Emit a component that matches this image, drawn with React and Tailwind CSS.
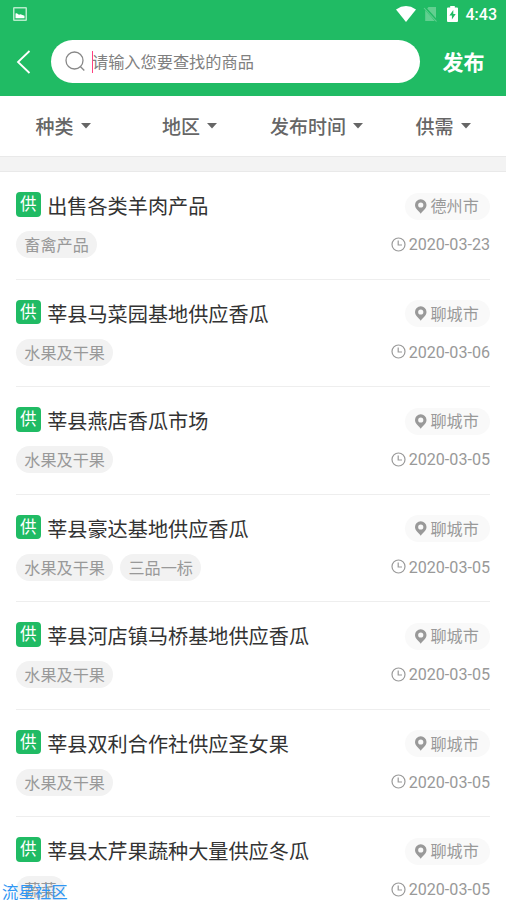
const items = [
  { title: '出售各类羊肉产品', city: '德州市', tags: ['畜禽产品'], date: '2020-03-23' },
  { title: '莘县马菜园基地供应香瓜', city: '聊城市', tags: ['水果及干果'], date: '2020-03-06' },
  { title: '莘县燕店香瓜市场', city: '聊城市', tags: ['水果及干果'], date: '2020-03-05' },
  { title: '莘县豪达基地供应香瓜', city: '聊城市', tags: ['水果及干果', '三品一标'], date: '2020-03-05' },
  { title: '莘县河店镇马桥基地供应香瓜', city: '聊城市', tags: ['水果及干果'], date: '2020-03-05' },
  { title: '莘县双利合作社供应圣女果', city: '聊城市', tags: ['水果及干果'], date: '2020-03-05' },
  { title: '莘县太芹果蔬种大量供应冬瓜', city: '聊城市', tags: ['蔬菜'], date: '2020-03-05' },
];

function StatusBar() {
  return (
    <div className="flex h-[28px] items-center pl-[13px] pr-[9px]">
      <svg className="h-[14px] w-[14px]" viewBox="0 0 14 14">
        <rect x="0.75" y="0.75" width="12.5" height="12.5" rx="0.5" fill="none" stroke="#b5ecca" strokeWidth="1.5" />
        <path d="M2.500 11.300V6.600l1.300-.4 2.200 1.600 1.500-.6 4 1.600v2.500z" fill="#fff" />
      </svg>
      <svg className="ml-auto h-4 w-5" viewBox="0 0 20 16">
        <path d="M0 3.4Q10-3.4 20 3.4L10 16z" fill="#fff" />
      </svg>
      <svg className="ml-[7px] h-4 w-[15px]" viewBox="0 0 15 16">
        <path d="M5.500 1H13v11.200L4.200 2.500zM2.200 4.300L11.800 15H2.200z" fill="#62cf90" />
        <path d="M1 2l12.500 13.500" stroke="#62cf90" strokeWidth="1.100" />
      </svg>
      <svg className="ml-[9px] h-4 w-[11px]" viewBox="0 0 11 16">
        <path d="M3.2 0h4.6v1.6H10a1 1 0 0 1 1 1V15a1 1 0 0 1-1 1H1a1 1 0 0 1-1-1V2.600a1 1 0 0 1 1-1h2.200z" fill="#fff" />
        <path d="M6.300 4L2.400 9.500h2.500V13.500L8.700 8H6.300z" fill="#20bb64" />
      </svg>
      <span className="ml-[8px] mt-[2px] font-['Roboto'] text-[16px] font-medium leading-none">4:43</span>
    </div>
  );
}

function Filter({ label, className }) {
  return (
    <div className={'flex items-center gap-[7px] ' + className}>
      <span className="text-[19px] font-medium leading-none">{label}</span>
      <svg className="h-[6px] w-[10px]" viewBox="0 0 10 6">
        <path d="M0 0h10L5 5.500z" fill="#666" />
      </svg>
    </div>
  );
}

function Row({ item }) {
  return (
    <li className="h-[107.5px] shrink-0 border-b border-[#eee] pt-[20px]">
      <div className="flex h-[28px] items-start">
        <span className="flex h-[24.500px] w-[24.500px] items-center justify-center rounded-[4px] bg-[#20bb64] pb-[2px] text-[16.500px] leading-none text-white">供</span>
        <span className="ml-[6.700px] text-[20.150px] leading-[28px] text-[#333]">{item.title}</span>
        <span className="ml-auto mt-[0.500px] flex h-[27px] w-[85px] items-center rounded-full bg-[#f9f9f9] pl-[10px] text-[16.130px] text-[#999]">
          <svg className="mr-[4px] h-[15px] w-[11.500px]" viewBox="0 0 12 15">
            <path fillRule="evenodd" d="M6 0a6 6 0 0 1 6 6c0 3.500-3.600 6.200-6 9C3.600 12.200 0 9.500 0 6a6 6 0 0 1 6-6zm0 3.200a2.700 2.700 0 1 0 0 5.400 2.700 2.700 0 0 0 0-5.400z" fill="#999" />
          </svg>
          <span className="pb-px leading-none">{item.city}</span>
        </span>
      </div>
      <div className="mt-[11px] flex h-[27px] items-center">
        <div className="flex gap-[7px]">
          {item.tags.map((tag) => (
            <span key={tag} className="flex h-[27px] items-center rounded-full bg-[#f2f2f2] px-[8.300px] text-[16.130px] leading-none text-[#999]">{tag}</span>
          ))}
        </div>
        <svg className="mb-px ml-auto h-[15px] w-[15px]" viewBox="0 0 15 15" fill="none" stroke="#999" strokeWidth="1.200">
          <circle cx="7.500" cy="7.500" r="6.500" />
          <path d="M7.200 3.500V8h3.800" />
        </svg>
        <span className="ml-[3px] mt-[2px] font-['Roboto'] text-[16.130px] leading-none text-[#999]">{item.date}</span>
      </div>
    </li>
  );
}

export default function App() {
  return (
    <div className="relative flex h-[900px] w-[506px] flex-col overflow-hidden bg-white font-['Noto_Sans_CJK_SC',sans-serif]">
      <header className="h-[96px] shrink-0 bg-[#20bb64] text-white">
        <StatusBar />
        <div className="mt-[12px] flex h-[43px] items-center">
          <svg className="ml-[16px] h-[24px] w-[15px]" viewBox="0 0 15 24" fill="none" stroke="#fff" strokeWidth="1.800">
            <path d="M13.500 1L2 12l11.500 11" />
          </svg>
          <div className="ml-[20px] flex h-[43px] w-[369px] items-center rounded-full bg-white pl-[14px]">
            <svg className="h-[21px] w-[20px]" viewBox="0 0 20 21" fill="none" stroke="#888" strokeWidth="1.300">
              <circle cx="9.500" cy="9.500" r="8.500" />
              <path d="M15.300 15.500l4 4" />
            </svg>
            <span className="ml-[7px] h-[22px] w-px bg-[#ff4081]" />
            <span className="-ml-px text-[16.200px] leading-none text-[#808080]">请输入您要查找的商品</span>
          </div>
          <span className="ml-[22.500px] text-[21px] font-bold leading-none">发布</span>
        </div>
      </header>
      <nav className="flex h-[60px] shrink-0 items-center pb-px text-[#666]">
        <Filter label="种类" className="w-[126px] justify-center" />
        <Filter label="地区" className="w-[127px] justify-center" />
        <Filter label="发布时间" className="w-[127px] justify-center" />
        <Filter label="供需" className="w-[126px] justify-center" />
      </nav>
      <div className="h-[16px] shrink-0 border-y border-[#e9e9e9] bg-[#f3f3f3]" />
      <ul className="flex flex-col px-4">
        {items.map((item) => (
          <Row key={item.title} item={item} />
        ))}
      </ul>
      <div className="absolute left-[2px] top-[882px] text-[16.400px] leading-[18px] text-[#2f96f3]">流星社区</div>
    </div>
  );
}
